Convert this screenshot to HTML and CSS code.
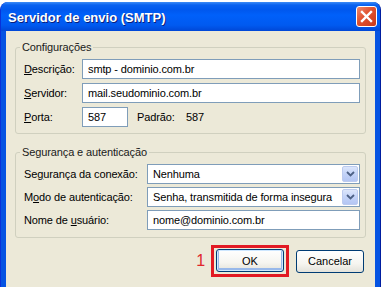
FILE: index.html
```html
<!DOCTYPE html>
<html lang="pt-BR">

<head>
  <meta charset="UTF-8">
  <meta name="viewport" content="width=device-width, initial-scale=1.0">
  <title>Servidor de envio (SMTP)</title>
  <link rel="stylesheet" href="styles.css">
</head>

<body>
  <div class="window">
    <div class="titlebar">
      <span class="title">Servidor de envio (SMTP)</span>
      <div class="close">
        <svg width="13" height="13" viewBox="0 0 13 13">
          <path d="M2 2 L11 11 M11 2 L2 11" stroke="#fff" stroke-width="2.4" stroke-linecap="square" />
        </svg>
      </div>
    </div>

    <div class="client">
      <fieldset class="group group-config">
        <legend>Configurações</legend>
        <div class="row">
          <label><u>D</u>escrição:</label>
          <div class="field">smtp - dominio.com.br</div>
        </div>
        <div class="row">
          <label><u>S</u>ervidor:</label>
          <div class="field">mail.seudominio.com.br</div>
        </div>
        <div class="row">
          <label><u>P</u>orta:</label>
          <div class="port-line">
            <div class="field port">587</div>
            <span class="default-label">Padrão:</span>
            <span>587</span>
          </div>
        </div>
      </fieldset>

      <fieldset class="group group-security">
        <legend>Segurança e autenticação</legend>
        <div class="row">
          <label>Se<u>g</u>urança da conexão:</label>
          <div class="field select">
            <span>Nenhuma</span>
            <span class="drop">
              <svg width="9" height="6" viewBox="0 0 9 6">
                <path d="M1 1 L4.5 4.5 L8 1" fill="none" stroke="#4d6185" stroke-width="1.8" />
              </svg>
            </span>
          </div>
        </div>
        <div class="row">
          <label>M<u>o</u>do de autenticação:</label>
          <div class="field select">
            <span>Senha, transmitida de forma insegura</span>
            <span class="drop">
              <svg width="9" height="6" viewBox="0 0 9 6">
                <path d="M1 1 L4.5 4.5 L8 1" fill="none" stroke="#4d6185" stroke-width="1.8" />
              </svg>
            </span>
          </div>
        </div>
        <div class="row">
          <label>Nome de <u>u</u>suário:</label>
          <div class="field">nome@dominio.com.br</div>
        </div>
      </fieldset>

      <div class="actions">
        <span class="marker">1</span>
        <div class="highlight">
          <button class="btn btn-default">OK</button>
        </div>
        <button class="btn">Cancelar</button>
      </div>
    </div>
  </div>
</body>

</html>
```

FILE: styles.css
```css
* {
  margin: 0;
  padding: 0;
  box-sizing: border-box;
}

body {
  background: #fff;
  font-family: 'Liberation Sans', Arial, sans-serif;
  font-size: 11px;
  letter-spacing: -0.12px;
  color: #000;
  overflow: hidden;
}

.window {
  margin-top: 2px;
  width: 381px;
  height: 290px;
  display: flex;
  flex-direction: column;
  background: #0553e2;
  border-radius: 8px 8px 0 0;
  border-left: 1px solid #0831d9;
  border-right: 1px solid #001ea0;
}

.titlebar {
  height: 29px;
  display: flex;
  justify-content: space-between;
  align-items: center;
  padding: 0 3px 0 7px;
  border-radius: 7px 7px 0 0;
  background: linear-gradient(to bottom, #3d8cf6 0, #0a62f0 3px, #0058ee 8px, #0060fa 45%, #005af0 80%, #0047d6 100%);
}

.title {
  color: #fff;
  font-size: 13px;
  font-weight: bold;
  letter-spacing: 0;
  text-shadow: 1px 1px 0 #0a1e7a;
  padding-top: 1px;
}

.close {
  width: 21px;
  height: 21px;
  display: flex;
  justify-content: center;
  align-items: center;
  border: 1px solid #fff;
  border-radius: 3px;
  background: linear-gradient(135deg, #f08a6c 0%, #e0512f 45%, #c8391a 100%);
}

.client {
  flex: 1;
  margin: 0 5px 5px 5px;
  background: #ece9d8;
  padding: 10px 9px 0 9px;
}

.group {
  border: 1px solid #d0d0bf;
  border-radius: 3px;
  padding: 5px 5px 6px 7px;
}

.group legend {
  padding: 0 2px;
  margin-left: -3px;
  line-height: 13px;
  color: #1a1a1a;
}

.row {
  display: grid;
  align-items: center;
}

.group-config .row {
  grid-template-columns: 59px 1fr;
}

.group-config .row + .row {
  margin-top: 4px;
}

.group-security {
  margin-top: 12px;
  padding-bottom: 7px;
}

.group-security .row {
  grid-template-columns: 124px 1fr;
}

.group-security .row + .row {
  margin-top: 3px;
}

.row label {
  padding-left: 1px;
}

.field {
  height: 20px;
  line-height: 18px;
  border: 1px solid #7f9db9;
  background: #fff;
  padding: 0 5px;
  white-space: nowrap;
  overflow: hidden;
}

.select {
  display: flex;
  justify-content: space-between;
  align-items: center;
  padding-right: 1px;
}

.drop {
  width: 16px;
  height: 16px;
  flex-shrink: 0;
  display: flex;
  justify-content: center;
  align-items: center;
  border-radius: 2px;
  background: linear-gradient(to bottom, #dce6fb 0%, #c3d3f8 50%, #b4c6f3 100%);
  border: 1px solid #bccbef;
}

.port-line {
  display: flex;
  align-items: center;
}

.port {
  width: 46px;
}

.default-label {
  width: 49px;
  margin-left: 9px;
}

.actions {
  display: flex;
  justify-content: flex-end;
  align-items: center;
  margin-top: 7px;
  padding-right: 2px;
}

.marker {
  color: #e0262c;
  font-size: 16px;
  margin-right: 6px;
}

.highlight {
  border: 3px solid #e21a24;
  padding: 1px 2px 2px 2px;
}

.btn {
  width: 68px;
  height: 23px;
  font-family: 'Liberation Sans', Arial, sans-serif;
  font-size: 11px;
  color: #000;
  border: 1px solid #003c74;
  border-radius: 3px;
  background: linear-gradient(to bottom, #fff 0%, #f6f5f0 60%, #e3e2da 100%);
}

.btn-default {
  box-shadow: inset 0 0 0 1px #cee7ff, inset 0 -1px 0 2px #98b8ea;
}

.highlight + .btn {
  margin-left: 7px;
}
```
